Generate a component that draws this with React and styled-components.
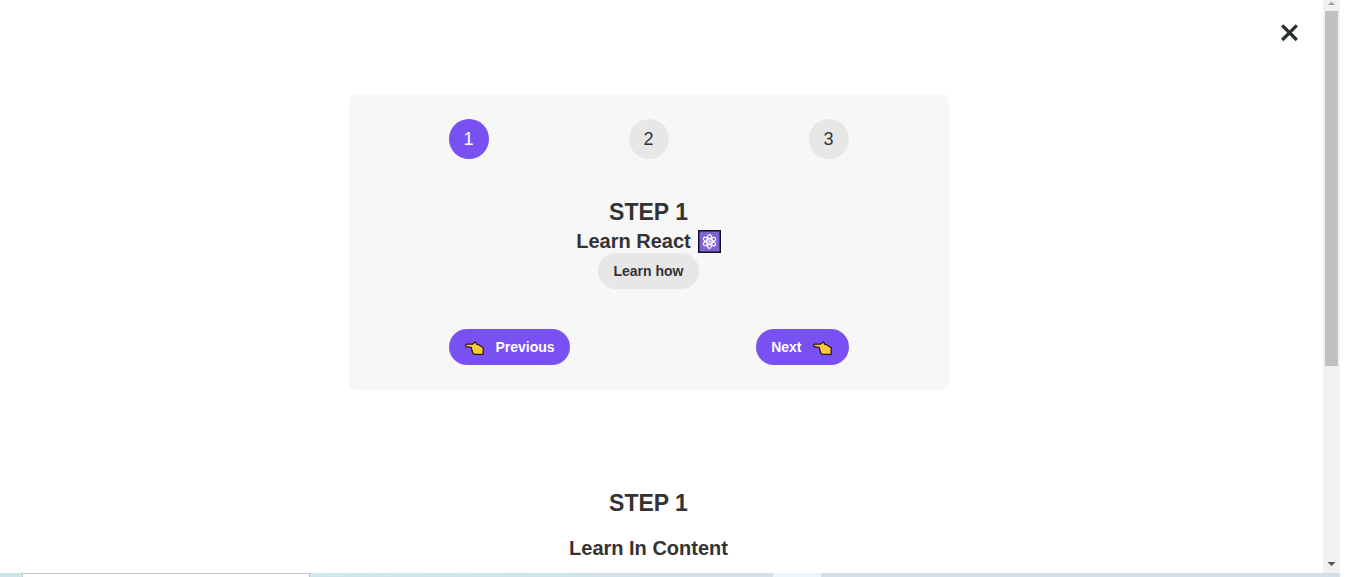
import React, { useState } from "react";
import styled, { createGlobalStyle } from "styled-components";

const GlobalStyle = createGlobalStyle`
  * { box-sizing: border-box; margin: 0; padding: 0; }
  body {
    font-family: "Liberation Sans", Arial, sans-serif;
    color: #333;
    background: #fff;
  }
`;

const Screen = styled.div`
  display: flex;
  flex-direction: column;
  height: 100vh;
  padding-right: 26px;
  overflow: hidden;
`;

const Viewport = styled.div`
  display: flex;
  flex: 1;
  min-height: 0;
`;

const Page = styled.main`
  flex: 1;
  overflow: hidden;
`;

const Header = styled.header`
  display: flex;
  justify-content: flex-end;
  padding: 24px 24px 52px;
`;

const Content = styled.div`
  display: flex;
  flex-direction: column;
  align-items: center;
  padding-right: 26px;
`;

const CloseButton = styled.button`
  display: flex;
  border: none;
  background: none;
  color: #2a302c;
  cursor: pointer;
`;

const Card = styled.section`
  width: 600px;
  max-width: 100%;
  padding: 25px 100px;
  border-radius: 7px;
  background: #f7f7f7;
`;

const Row = styled.div`
  display: flex;
  justify-content: space-between;
`;

const StepNumber = styled.div`
  display: flex;
  align-items: center;
  justify-content: center;
  width: 40px;
  height: 40px;
  border-radius: 50%;
  font-size: 18px;
  background: ${(p) => (p.$active ? "#7950f2" : "#e7e7e7")};
  color: ${(p) => (p.$active ? "#fff" : "#333")};
`;

const Message = styled.div`
  display: flex;
  flex-direction: column;
  align-items: center;
  margin: ${(p) => p.$space}px 0;
`;

const Title = styled.h3`
  font-size: 23px;
  line-height: 27px;
  margin-bottom: ${(p) => p.$gap}px;
`;

const Text = styled.p`
  display: flex;
  align-items: center;
  gap: 7px;
  font-size: 20px;
  font-weight: bold;
  line-height: 24px;
`;

const Button = styled.button`
  display: flex;
  align-items: center;
  gap: 10px;
  height: 36px;
  padding: 0 15px;
  border: none;
  border-radius: 100px;
  background: ${(p) => (p.$primary ? "#7950f2" : "#e7e7e7")};
  color: ${(p) => (p.$primary ? "#fff" : "#333")};
  font-family: inherit;
  font-size: 14px;
  font-weight: bold;
  cursor: pointer;
`;

const Scrollbar = styled.div`
  display: flex;
  flex-direction: column;
  align-items: center;
  width: 17px;
  background: #f1f1f1;
`;

const Arrow = styled.svg`
  flex-shrink: 0;
  display: block;
  width: 17px;
  height: 11px;
  fill: ${(p) => p.$tone};
`;

const Thumb = styled.div`
  width: 13px;
  height: 62%;
  margin-bottom: auto;
  background: #c1c1c1;
`;

const Taskbar = styled.div`
  display: flex;
  height: 4px;
  flex-shrink: 0;
`;

const Segment = styled.div`
  flex: ${(p) => p.$size} 1 0;
  background: ${(p) => p.$color};
`;

const ActiveTab = styled(Segment)`
  border: 1px solid #c3c6c8;
  border-bottom: none;
`;

function CloseIcon() {
  return (
    <svg width="19" height="18" viewBox="0 0 19 18" aria-hidden="true">
      <path d="M2.2 1.4 16.8 16M16.8 1.4 2.2 16" fill="none" stroke="currentColor" strokeWidth="3.2" />
    </svg>
  );
}

function AtomIcon() {
  return (
    <svg width="23" height="23" viewBox="0 0 23 23" aria-hidden="true">
      <rect x=".75" y=".75" width="21.5" height="21.5" fill="#8064d4" stroke="#141020" strokeWidth="1.5" />
      <g fill="none" stroke="#fff" strokeWidth="1.3">
        <ellipse cx="11.5" cy="11.5" rx="2.6" ry="6.8" />
        <ellipse cx="11.5" cy="11.5" rx="2.6" ry="6.8" transform="rotate(60 11.5 11.5)" />
        <ellipse cx="11.5" cy="11.5" rx="2.6" ry="6.8" transform="rotate(120 11.5 11.5)" />
      </g>
      <circle cx="11.5" cy="11.5" r="1.2" fill="#fff" />
    </svg>
  );
}

function HandIcon() {
  return (
    <svg width="22" height="18" viewBox="0 0 22 18" aria-hidden="true">
      <path
        d="M3.2 6.2H8.4L10.8 4.2Q11.8 4 12.2 5L12.6 6.2 15 7 19.2 9.8V16.3H10.2L8.6 15 8.2 13.2 7.8 11.6 7.2 9.4 3.2 8.8Q1.7 8.6 1.7 7.4 1.7 6.3 3.2 6.2Z"
        fill="#ffc83d"
        stroke="#2b1a18"
        strokeWidth="1.3"
        strokeLinejoin="round"
      />
    </svg>
  );
}

const steps = [1, 2, 3];

export default function App() {
  const [step, setStep] = useState(1);
  const [isOpen, setIsOpen] = useState(true);

  return (
    <>
      <GlobalStyle />
      <Screen>
        <Viewport>
          <Page>
            <Header>
              <CloseButton aria-label="Close" onClick={() => setIsOpen(!isOpen)}>
                <CloseIcon />
              </CloseButton>
            </Header>
            <Content>
              {isOpen && (
                <Card>
                  <Row>
                    {steps.map((n) => (
                      <StepNumber key={n} $active={step >= n}>{n}</StepNumber>
                    ))}
                  </Row>
                  <Message $space={40}>
                    <Title $gap={3}>STEP {step}</Title>
                    <Text>Learn React <AtomIcon /></Text>
                    <Button>Learn how</Button>
                  </Message>
                  <Row>
                    <Button $primary onClick={() => setStep(Math.max(1, step - 1))}>
                      <HandIcon />Previous
                    </Button>
                    <Button $primary onClick={() => setStep(Math.min(3, step + 1))}>
                      Next<HandIcon />
                    </Button>
                  </Row>
                </Card>
              )}
              <Message $space={100}>
                <Title $gap={19}>STEP 1</Title>
                <Text>Learn In Content</Text>
              </Message>
            </Content>
          </Page>
          <Scrollbar aria-hidden="true">
            <Arrow $tone="#a3a3a3" viewBox="0 0 17 11"><path d="M5 5 8.5 1.5 12 5Z" /></Arrow>
            <Thumb />
            <Arrow $tone="#505050" viewBox="0 0 17 11"><path d="M4.5 0 8.5 4 12.5 0Z" /></Arrow>
          </Scrollbar>
        </Viewport>
        <Taskbar aria-hidden="true">
          <Segment $size={22} $color="#cfe4ea" />
          <ActiveTab $size={286} $color="#fff" />
          <Segment $size={463} $color="linear-gradient(90deg, #cfe6ec, #d3e1ea)" />
          <Segment $size={48} $color="#ecf5fb" />
          <Segment $size={519} $color="#d2dfe9" />
        </Taskbar>
      </Screen>
    </>
  );
}
